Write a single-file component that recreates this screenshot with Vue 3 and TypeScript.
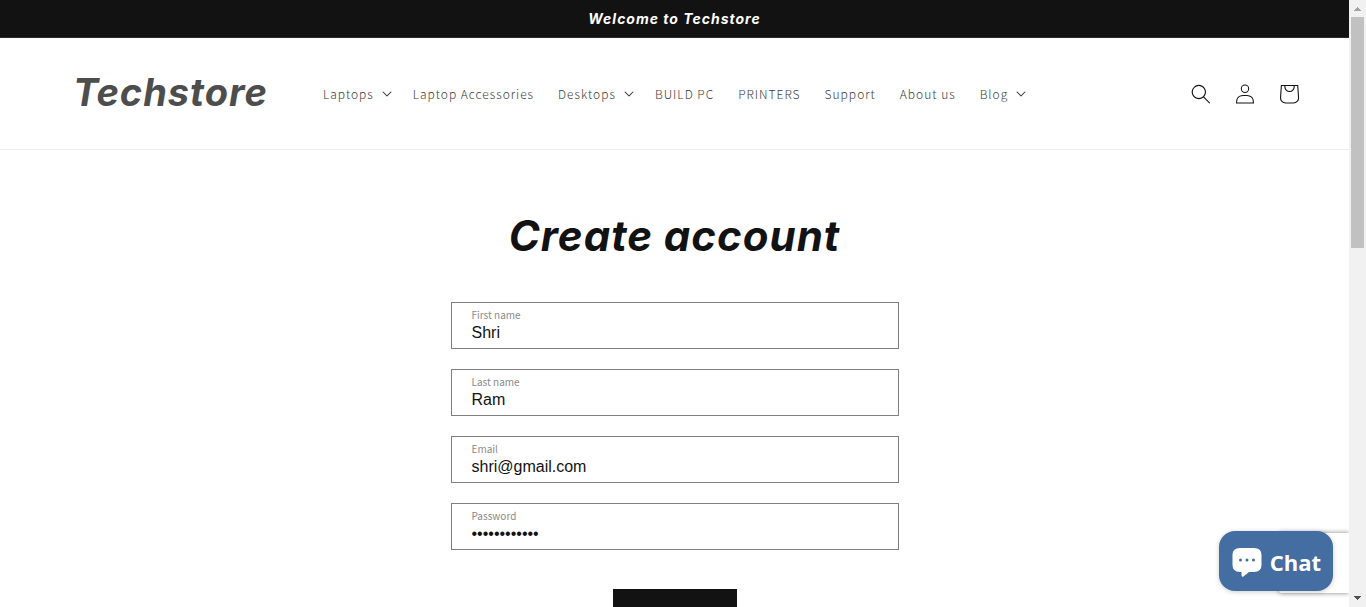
<script setup lang="ts">
import { ref } from 'vue'

interface NavItem {
  label: string
  menu: boolean
}

interface Field {
  id: string
  label: string
  type: string
  value: string
}

const nav: NavItem[] = [
  { label: 'Laptops', menu: true },
  { label: 'Laptop Accessories', menu: false },
  { label: 'Desktops', menu: true },
  { label: 'BUILD PC', menu: false },
  { label: 'PRINTERS', menu: false },
  { label: 'Support', menu: false },
  { label: 'About us', menu: false },
  { label: 'Blog', menu: true },
]

const fields = ref<Field[]>([
  { id: 'first-name', label: 'First name', type: 'text', value: 'Shri' },
  { id: 'last-name', label: 'Last name', type: 'text', value: 'Ram' },
  { id: 'email', label: 'Email', type: 'email', value: 'shri@gmail.com' },
  { id: 'password', label: 'Password', type: 'password', value: 'techstore123' },
])
</script>

<template>
  <div class="window">
    <div class="page">
      <p class="announcement">Welcome to Techstore</p>

      <header class="header">
        <a class="logo" href="#">Techstore</a>
        <nav class="nav">
          <template v-for="item in nav" :key="item.label">
            <button v-if="item.menu" class="nav-item nav-menu" type="button">
              {{ item.label }}
              <svg class="caret" viewBox="0 0 10 6" aria-hidden="true">
                <path d="M9.354.646a.5.5 0 00-.708 0L5 4.293 1.354.646a.5.5 0 00-.708.708l4 4a.5.5 0 00.708 0l4-4a.5.5 0 000-.708z" />
              </svg>
            </button>
            <a v-else class="nav-item" href="#">{{ item.label }}</a>
          </template>
        </nav>
        <div class="tools">
          <button class="tool" type="button" aria-label="Search">
            <svg class="glyph" viewBox="0 0 18 19">
              <path fill-rule="evenodd" d="M11.03 11.68A5.784 5.784 0 112.85 3.5a5.784 5.784 0 018.18 8.18zm.26 1.12a6.78 6.78 0 11.72-.7l5.4 5.4a.5.5 0 11-.71.7l-5.41-5.4z" />
            </svg>
          </button>
          <a class="tool" href="#" aria-label="Log in">
            <svg class="glyph" viewBox="0 0 18 19">
              <path fill-rule="evenodd" d="M6 4.5a3 3 0 116 0 3 3 0 01-6 0zm3-4a4 4 0 100 8 4 4 0 000-8zm5.58 12.15c1.12.82 1.83 2.24 1.91 4.85H1.51c.08-2.6.79-4.03 1.9-4.85C4.66 11.75 6.5 11.5 9 11.5s4.35.26 5.58 1.15zM9 10.5c-2.5 0-4.65.24-6.17 1.35C1.27 12.98.5 14.93.5 18v.5h17V18c0-3.07-.77-5.02-2.33-6.15-1.52-1.1-3.67-1.35-6.17-1.35z" />
            </svg>
          </a>
          <a class="tool" href="#" aria-label="Cart">
            <svg class="bag" viewBox="0 0 40 40">
              <path fill-rule="evenodd" d="M15.75 11.8h-3.16l-.77 11.6a5 5 0 0 0 4.99 5.34h7.38a5 5 0 0 0 4.99-5.33L28.4 11.8zm0 1h-2.22l-.71 10.67a4 4 0 0 0 3.99 4.27h7.38a4 4 0 0 0 4-4.27l-.72-10.67h-2.22v.63a4.75 4.75 0 1 1-9.5 0zm8.5 0h-7.5v.63a3.75 3.75 0 1 0 7.5 0z" />
            </svg>
          </a>
        </div>
      </header>

      <main class="main">
        <h1 class="title">Create account</h1>
        <form class="form" @submit.prevent>
          <div v-for="field in fields" :key="field.id" class="field">
            <label class="field-label" :for="field.id">{{ field.label }}</label>
            <input :id="field.id" v-model="field.value" class="field-input" :type="field.type" autocomplete="off" />
          </div>
          <button class="submit" type="submit">Create</button>
        </form>
      </main>

      <div class="badge"></div>
      <button class="chat" type="button">
        <svg class="bubble" viewBox="0 0 30 30" aria-hidden="true">
          <path d="M8 1H22Q29.500 1 29.500 8V18Q29.500 25 22 25H17L11.500 29.500Q9.500 30.500 9.500 28V25H8Q.500 25 .500 18V8Q.500 1 8 1Z" fill="#fff" />
          <circle cx="8.500" cy="13" r="1.500" fill="#446da1" />
          <circle cx="15" cy="13" r="1.500" fill="#446da1" />
          <circle cx="21.500" cy="13" r="1.500" fill="#446da1" />
        </svg>
        Chat
      </button>
    </div>

    <div class="scrollbar" aria-hidden="true">
      <svg class="arrow" viewBox="0 0 17 17"><path d="M8 7h1v1h1v1h1v1h1v1H5v-1h1V9h1V8h1z" fill="#a3a3a3" /></svg>
      <div class="thumb"></div>
      <svg class="arrow" viewBox="0 0 17 17"><path d="M5 6h7v1h-1v1h-1v1H9v1H8V9H7V8H6V7H5z" fill="#505050" /></svg>
    </div>
  </div>
</template>

<style>
body {
  margin: 0;
}
</style>

<style scoped>
.window {
  display: flex;
  height: 100vh;
  overflow: hidden;
  background: #fff;
  color: #121212;
  font-family: "Noto Sans CJK SC", "Open Sans", sans-serif;
}

.page {
  position: relative;
  flex: 1;
  min-width: 0;
  overflow: hidden;
}

button {
  border: 0;
  padding: 0;
  background: none;
  color: inherit;
  font: inherit;
  letter-spacing: inherit;
  cursor: pointer;
}

a {
  color: inherit;
  text-decoration: none;
}

.announcement {
  margin: 0;
  border-bottom: 1px solid #292929;
  background: #121212;
  color: #fff;
  font: italic 700 14px/37px Inter, sans-serif;
  letter-spacing: 1px;
  text-align: center;
}

.header {
  display: flex;
  align-items: center;
  box-sizing: border-box;
  min-height: 112px;
  padding: 0 38px 0 73px;
  border-bottom: 1px solid #ebebeb;
}

.logo {
  flex: 0 0 238px;
  padding-bottom: 3px;
  color: #4d4d4d;
  font: italic 700 38px/44px Inter, sans-serif;
  letter-spacing: 1px;
}

.nav {
  display: flex;
  flex: 1;
  color: #3c3c3c;
  font-size: 12px;
  font-weight: 300;
  line-height: 20px;
  letter-spacing: 1px;
  white-space: nowrap;
}

.nav-item {
  padding: 12px;
}

.nav-menu {
  display: flex;
  align-items: center;
  gap: 8px;
  padding-right: 9px;
}

.caret {
  width: 10px;
  height: 6px;
  fill: #333;
}

.tools {
  display: flex;
}

.tool {
  display: flex;
  align-items: center;
  justify-content: center;
  width: 44px;
  height: 44px;
}

.glyph {
  width: 20px;
  height: 20px;
  fill: #121212;
}

.bag {
  width: 44px;
  height: 44px;
  fill: #121212;
}

.main {
  box-sizing: border-box;
  width: 100%;
  max-width: 478px;
  margin: 0 auto;
  padding: 60px 15px;
}

.title {
  margin: 0 0 40px;
  font: italic 700 42px/52px Inter, sans-serif;
  letter-spacing: 1px;
  text-align: center;
  white-space: nowrap;
}

.form {
  display: flex;
  flex-direction: column;
  gap: 20px;
}

.field {
  display: flex;
  flex-direction: column;
  gap: 1px;
  box-sizing: border-box;
  min-height: 47px;
  padding: 5px 20px;
  border: 1px solid #7f7f7f;
}

.field-label {
  color: #8a8a8a;
  font-size: 10px;
  line-height: 14px;
}

.field-input {
  width: 100%;
  height: 20px;
  padding: 0;
  border: 0;
  outline: 0;
  background: none;
  color: #121212;
  font: 16px/20px "Liberation Sans", Arial, sans-serif;
}

.submit {
  align-self: center;
  min-width: 124px;
  min-height: 60px;
  margin-top: 19px;
  background: #121212;
  color: #fff;
  font-size: 14px;
  line-height: 16px;
  letter-spacing: 1px;
}

.badge {
  position: absolute;
  right: 0;
  bottom: 14px;
  width: 70px;
  height: 60px;
  border-radius: 2px 0 0 2px;
  background: #fff;
  box-shadow: 0 0 5px #808080;
}

.chat {
  position: absolute;
  right: 16px;
  bottom: 16px;
  display: flex;
  align-items: center;
  gap: 8px;
  height: 60px;
  padding: 2px 12px 0 13px;
  border-radius: 16px;
  background: #446da1;
  box-shadow: 0 1px 5px rgba(0, 0, 0, 0.2);
  color: #fff;
  font: 700 22px/30px "Open Sans", sans-serif;
}

.bubble {
  width: 30px;
  height: 30px;
}

.scrollbar {
  display: flex;
  flex: 0 0 17px;
  flex-direction: column;
  justify-content: space-between;
  background: #f1f1f1;
}

.arrow {
  flex: none;
  width: 17px;
  height: 17px;
}

.thumb {
  height: 38%;
  margin: 0 2px auto;
  background: #c1c1c1;
}
</style>
